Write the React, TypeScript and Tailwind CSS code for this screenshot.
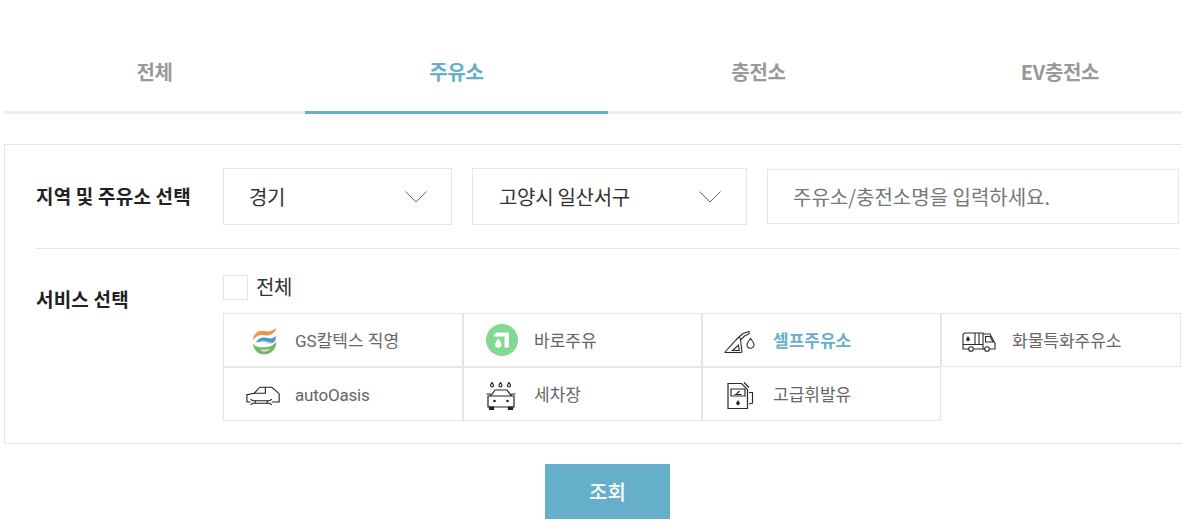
import { ReactNode } from 'react';

const GsLogo = () => (
  <svg width="25" height="27" viewBox="0 0 25 27" fill="none" className="ml-[2px]">
    <path d="M1 12.500C1 5.500 7 1.800 12 3c4.500 1 8 .2 12.500-3-2 5.500-7 8.500-12.500 7.300C7.500 6.500 3.500 8 1 12.500Z" fill="#e9964a" />
    <path d="M4 14.500C6 10 11 8.800 15 10c3.500 1 6 .5 8.500-2 1 3.500-.5 6.500-4.500 7.300-4.500.8-8-3-15-.8Z" fill="#4c96cb" />
    <path d="M7 14.500c2.500-2 5.500-2 8-1 2 .8 4 1.500 6 1-3 1.800-6 1-8.500.2-2-.6-3.500-.6-5.500-.2Z" fill="#c7e0ee" />
    <path d="M1 15.500c1.500 2.500 4 3.500 8 3.800 6 .4 11.500-.8 15.200-5.300.5 7-5.200 12.500-12 12.500C6 26.500 1 21.500 1 15.500Z" fill="#78b66c" />
    <path d="M8 21.500c3.500.6 6.500.4 10-.8-1.500 2-3.800 3-6 2.800-1.500-.1-3-.8-4-2Z" fill="#e6eccd" />
  </svg>
);

const BaroIcon = () => (
  <svg width="32" height="32" viewBox="0 0 32 32" fill="none" className="-mt-[3px]">
    <circle cx="16" cy="16" r="16" fill="#82d992" />
    <path d="M10 8.500h13v15h-4.500V12.500H7Z" fill="#fff" />
    <path d="M12.300 14.500c2 2.800 3.200 4.300 3.200 6a3.200 3.200 0 0 1-6.400 0c0-1.700 1.200-3.200 3.200-6Z" fill="#fff" />
  </svg>
);

const SelfIcon = () => (
  <svg width="32" height="24" viewBox="0 0 32 24" fill="none" stroke="#2b2b2b" strokeWidth="1.100" className="mr-[2px]">
    <path d="M0.500 22.500H17.500" />
    <path d="M1 22 12 10l3-3" />
    <path d="M15 7l4-3.500L25 1.500V4l-4.500 2L17 9.500 15 7Z" />
    <path d="M16.500 9.500 18 22.500" />
    <path d="M8.500 20.500l6-5.500.7 5.500Z" />
    <path d="M26.500 8.500c2.400 3 3.500 4.700 3.500 6.200a3.500 3.500 0 0 1-7 0c0-1.500 1.100-3.200 3.500-6.200Z" />
  </svg>
);

const TruckIcon = () => (
  <svg width="34" height="20" viewBox="0 0 34 20" fill="none" stroke="#2b2b2b" strokeWidth="1.100" className="mr-[2px]">
    <path d="M2.500 1H21v16H1V2.500Z" />
    <path d="M21 2h7l5 9.500V17H21" />
    <path d="M23.500 4.500H28l3 5.500h-7.500Z" />
    <path d="M13 1v11.500M17 1v11.500M1 12.500h20" />
    <path d="M6 4c1.200 1.800 1.800 2.700 1.800 3.500a1.800 1.800 0 0 1-3.600 0C4.200 6.700 4.800 5.800 6 4Z" fill="#2b2b2b" stroke="none" />
    <circle cx="9" cy="17" r="2.300" fill="#fff" />
    <circle cx="25" cy="17" r="2.300" fill="#fff" />
  </svg>
);

const CarIcon = () => (
  <svg width="38" height="20" viewBox="0 0 38 20" fill="none" stroke="#222" strokeWidth="1.200" className="ml-[1px]">
    <path d="M5 16.500H1V8.500L9 7l6-6.500h13L36 7.500v9h-8" />
    <path d="M9 7h12V.5" />
    <path d="M10 15.200h13M10 17.800h13" />
    <path d="M5 13.500l2.500 1.700H10v2.600H7.500L5 19.500" />
    <path d="M28 13.500l-2.500 1.700H23v2.600h2.500l2.500 1.700" />
  </svg>
);

const WashIcon = () => (
  <svg width="30" height="28" viewBox="0 0 30 28" fill="none" stroke="#222" strokeWidth="1.200" className="mr-[2px]">
    <path d="M6 .5c1 1.500 1.500 2.200 1.500 3a1.500 1.500 0 0 1-3 0c0-.8.500-1.500 1.500-3ZM14.500.5c1 1.500 1.500 2.200 1.500 3a1.500 1.500 0 0 1-3 0c0-.8.500-1.500 1.500-3ZM23 .5c1 1.500 1.500 2.200 1.500 3a1.500 1.500 0 0 1-3 0c0-.8.500-1.500 1.500-3Z" />
    <path d="M5 13.500 9 8h12l4 5.500" />
    <path d="M.500 12H4l1 1.500M29.500 12H26l-1 1.500" />
    <path d="M2 14h26v11H2Z" />
    <path d="M3.500 25h4v2.500h-4ZM22.500 25h4v2.500h-4Z" fill="#222" />
    <circle cx="8.500" cy="19" r="1.300" fill="#222" stroke="none" />
    <circle cx="21.500" cy="19" r="1.300" fill="#222" stroke="none" />
  </svg>
);

const PremiumIcon = () => (
  <svg width="28" height="28" viewBox="0 0 28 28" fill="none" stroke="#2b2b2b" strokeWidth="1.200">
    <path d="M1 1.500h13.500l6 6v19H1Z" />
    <path d="M17 .5l5 5" />
    <path d="M4 7h14v7H4Z" />
    <path d="M7.500 12.500h7M9.500 12l3-3" />
    <path d="M22 10.500h3.500V21L22 22" />
    <path d="M11 18c1.200 1.700 1.800 2.600 1.800 3.500a1.800 1.800 0 0 1-3.600 0c0-.9.600-1.800 1.800-3.500Z" fill="#2b2b2b" stroke="none" />
  </svg>
);

const Chevron = () => (
  <svg width="22" height="12" viewBox="0 0 22 12" fill="none" stroke="#666" strokeWidth="1">
    <path d="M0.500 0.500 11 11 21.500 0.500" />
  </svg>
);

const tabs = ['전체', '주유소', '충전소', 'EV충전소'];

const services: { label: string; icon: ReactNode; active?: boolean }[] = [
  { label: 'GS칼텍스 직영', icon: <GsLogo /> },
  { label: '바로주유', icon: <BaroIcon /> },
  { label: '셀프주유소', icon: <SelfIcon />, active: true },
  { label: '화물특화주유소', icon: <TruckIcon /> },
  { label: 'autoOasis', icon: <CarIcon /> },
  { label: '세차장', icon: <WashIcon /> },
  { label: '고급휘발유', icon: <PremiumIcon /> },
];

export default function App() {
  return (
    <div className="h-[521px] w-full overflow-hidden bg-white pl-1 font-['Noto_Sans_CJK_KR',sans-serif]">
      <div className="w-[1207px]">
        <div className="mt-[30px] grid grid-cols-[301px_303px_301px_302px] border-b-[3px] border-[#eeeeee] pt-[30px]">
          {tabs.map((tab, i) => (
            <button
              key={tab}
              className={`-mb-[3px] h-[54px] border-b-[3px] pb-[27px] text-[20px] leading-[24px] font-bold tracking-[-0.3px] ${
                i === 1 ? 'border-[#65afcb] text-[#65afcb]' : 'border-transparent text-[#999999]'
              }`}
            >
              {tab}
            </button>
          ))}
        </div>

        <div className="mt-[30px] border border-[#e5e5e5] px-[31px] pt-[23px] pb-[22px]">
          <div className="flex items-center border-b border-[#e5e5e5] pb-[23px]">
            <div className="w-[187px] shrink-0 text-[19px] tracking-[0.2px] font-bold text-[#222222]">지역 및 주유소 선택</div>
            <div className="flex h-[57px] w-[229px] shrink-0 items-center justify-between border border-[#e5e5e5] pr-[24px] pl-[25px] text-[20px] tracking-[-0.3px] text-[#333333]">
              <span>경기</span>
              <Chevron />
            </div>
            <div className="ml-5 flex h-[57px] w-[275px] shrink-0 items-center justify-between border border-[#e5e5e5] pr-[25px] pl-[26px] text-[20px] tracking-[-0.3px] text-[#333333]">
              <span>고양시 일산서구</span>
              <Chevron />
            </div>
            <input
              placeholder="주유소/충전소명을 입력하세요."
              className="ml-5 h-[55px] w-[412px] shrink-0 border border-[#e5e5e5] px-[25px] text-[20px] outline-none placeholder:text-[#777777]"
            />
          </div>

          <div className="flex">
            <div className="mt-[36px] w-[187px] shrink-0 text-[19px] tracking-[0.2px] font-bold text-[#222222]">서비스 선택</div>
            <div className="pt-[26px]">
              <label className="flex items-center gap-2">
                <span className="h-[25px] w-[25px] border border-[#e5e5e5]" />
                <span className="-mt-[2px] text-[20px] leading-[25px] tracking-[-0.3px] text-[#333333]">전체</span>
              </label>
              <div className="mt-[13px] grid w-[958px] grid-cols-[240px_239px_239px_240px]">
                {services.map((s, i) => (
                  <div
                    key={s.label}
                    className={`flex h-[54px] items-center border border-[#e5e5e5] ${i % 4 === 0 ? 'pl-[21px]' : 'pl-5'}`}
                  >
                    <div className="flex w-9 shrink-0 items-center justify-center pt-[3px]">{s.icon}</div>
                    <span
                      className={`ml-[14px] pt-1 font-['Roboto','Noto_Sans_CJK_KR',sans-serif] text-[17px] ${
                        s.active ? 'font-bold text-[#65afcb]' : 'text-[#666666]'
                      } ${s.label === 'autoOasis' ? 'tracking-[-0.2px]' : ''}`}
                    >
                      {s.label}
                    </span>
                  </div>
                ))}
              </div>
            </div>
          </div>
        </div>

        <div className="mt-5 flex justify-center">
          <button className="h-[55px] w-[125px] bg-[#65afcb] text-[20px] font-medium text-white">조회</button>
        </div>
      </div>
    </div>
  );
}
